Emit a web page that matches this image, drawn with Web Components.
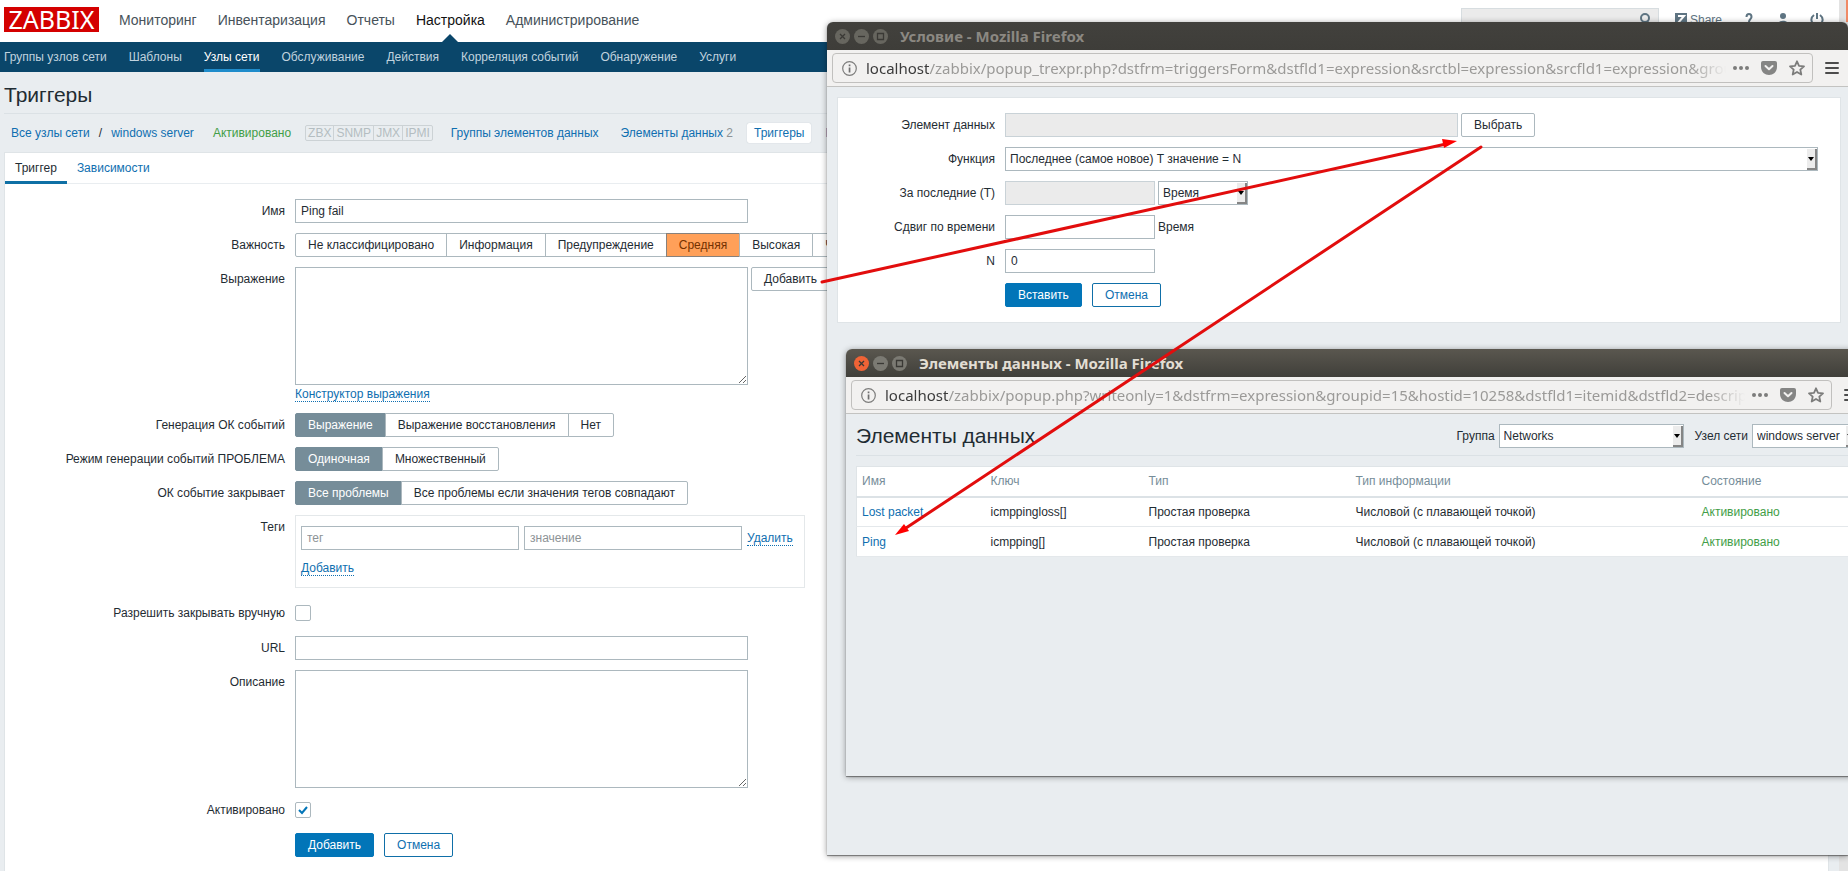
<!DOCTYPE html>
<html lang="ru">
<head>
<meta charset="utf-8">
<title>Триггеры</title>
<style>
html, body { margin: 0; }
body { font: 12px/16px "Liberation Sans", Arial, sans-serif; color: #1f2c33; background: #e9edf0; }
</style>
</head>
<body>
<zbx-desktop></zbx-desktop>
<script>
const base = `
*, *::before, *::after { box-sizing: border-box; }
a { color: #0f6fb0; text-decoration: none; }
h1 { margin: 0; font-size: 21px; line-height: 24px; font-weight: 400; }
`;
const controls = `
input, select, textarea, button { font: inherit; color: inherit; margin: 0; border-radius: 0; }
input[type=text], select, textarea { border: 1px solid #acb8be; background: #fff; height: 24px; padding: 0 5px; outline: 0; }
input[type=text]:disabled { background: #ebebeb; border-color: #c9d2d7; }
input::placeholder { color: #8d9396; opacity: 1; }
textarea { display: block; height: 118px; resize: vertical; padding: 4px 5px; }
.wide { width: 453px; }
.short { width: 150px; }
input[type=checkbox] { appearance: none; display: block; width: 16px; height: 16px; border: 1px solid #acb8be; border-radius: 2px; background: #fff; margin: 4px 0 5px; }
.check { display: grid; justify-content: start; }
.check > * { grid-area: 1 / 1; }
.check svg { margin: 4px 0 5px; width: 16px; height: 16px; pointer-events: none; visibility: hidden; }
.check input:checked + svg { visibility: visible; }
button { height: 24px; padding: 0 12px; border: 1px solid #acb8be; border-radius: 2px; background: #fff; white-space: nowrap; }
button.primary { background: #0275b8; border-color: #0275b8; color: #fff; }
button.ghost { border-color: #0f6fa8; color: #0f6fb0; }
button.text { height: 16px; padding: 0; border: 0; border-bottom: 1px dotted #0f6fb0; border-radius: 0; background: none; color: #0f6fb0; }
.select { display: inline-grid; }
.select > * { grid-area: 1 / 1; }
.select select { appearance: none; width: 100%; padding: 0 14px 0 4px; }
.select i { justify-self: end; width: 10px; margin: 2px 1px 1px 0; background: #ececec; border: solid #858585; border-width: 0 2px 2px 0; display: grid; place-items: center; pointer-events: none; }
.select svg { width: 6px; height: 4px; }
.line { display: flex; align-items: center; gap: 3px; }
.actions { display: flex; gap: 10px; }
`;
const caret = `<i><svg viewBox="0 0 6 4"><path d="M0 0h6L3 4z" fill="#000"/></svg></i>`;

function define(name, css, html) {
  const t = document.createElement('template');
  t.innerHTML = `<style>${base}${css}</style>${html}`;
  customElements.define(name, class extends HTMLElement {
    constructor() {
      super();
      this.attachShadow({ mode: 'open' }).append(t.content.cloneNode(true));
    }
  });
}

/* Label and field side by side */
define('zbx-row', `
:host { display: grid; grid-template-columns: var(--label-width, 280px) 1fr; gap: 10px; }
.l { text-align: right; line-height: 24px; white-space: nowrap; }
.f { min-width: 0; }
`, `<div class="l"><slot name="label"></slot></div><div class="f"><slot></slot></div>`);

/* Group of radio buttons drawn as joined segments */
customElements.define('zbx-segments', class extends HTMLElement {
  connectedCallback() {
    if (this.shadowRoot) return;
    const root = this.attachShadow({ mode: 'open' });
    const selected = Number(this.getAttribute('selected'));
    const items = this.getAttribute('options').split('|').map((text, i) => `
      <span><input type="radio" name="g" id="o${i}" ${i === selected ? 'checked' : ''}><label for="o${i}">${text}</label></span>`).join('');
    root.innerHTML = `<style>${base}
      :host { display: flex; --on: #768d99; --on-text: #fff; --on-line: #768d99; }
      :host([tone=average]) { --on: #ffa059; --on-text: #733100; --on-line: #87817c; }
      div { display: flex; }
      span { position: relative; margin-right: -1px; }
      input { position: absolute; inset: 0; margin: 0; opacity: 0; }
      label { display: block; height: 24px; line-height: 22px; padding: 0 12px; border: 1px solid #acb8be; background: #fff; white-space: nowrap; }
      span:first-child label { border-radius: 2px 0 0 2px; }
      span:last-child label { border-radius: 0 2px 2px 0; }
      input:checked + label { position: relative; background: var(--on); color: var(--on-text); border-color: var(--on-line); }
    </style><div role="radiogroup" aria-label="${this.getAttribute('label')}">${items}</div>`;
  }
});

define('zbx-header', `
:host { display: block; }
.top { display: flex; height: 42px; background: #fff; padding: 0 4px; }
.logo { align-self: center; margin: 0 20px 3px 0; width: 95px; height: 25px; background: #d40000; color: #fff; font: 25px/25px "Noto Sans", sans-serif; text-align: center; }
.main { display: flex; gap: 21px; font-size: 14px; line-height: 41px; }
.main a { color: #47525a; position: relative; }
.main .on { color: #111; }
.main .on::after { content: ""; position: absolute; left: 50%; bottom: 0; margin-left: -8px; border: 8px solid transparent; border-top: 0; border-bottom-color: #0a466a; }
.sub { display: flex; gap: 22px; height: 30px; padding: 0 4px; background: #0a466a; line-height: 30px; }
.sub a { color: #c0d3df; }
.sub .on { color: #fff; border-bottom: 3px solid #1f8ccb; }
.tools { margin: 0 11px 0 auto; display: flex; align-items: flex-start; padding-top: 8px; gap: 20px; }
.search { position: relative; width: 198px; margin-right: -4px; }
.search input { width: 100%; height: 24px; border: 1px solid #d7dde0; background: #ebebeb; }
.search svg { position: absolute; right: 4px; top: 4px; }
.tools a { display: flex; gap: 3px; color: #5e7482; line-height: 24px; }
.tools svg { display: block; margin-top: 5px; }
.search svg { margin: 0; }
`, `
<div class="top">
  <div class="logo">ZABBIX</div>
  <nav class="main"><a href="#">Мониторинг</a><a href="#">Инвентаризация</a><a href="#">Отчеты</a><a href="#" class="on">Настройка</a><a href="#">Администрирование</a></nav>
  <div class="tools">
    <div class="search"><input type="search" aria-label="Поиск"><svg width="16" height="16" viewBox="0 0 16 16" fill="none" stroke="#5e7482" stroke-width="2"><circle cx="6" cy="6" r="4"/><path d="M8 9l3 4"/></svg></div>
    <a href="#"><svg width="12" height="12" viewBox="0 0 12 12"><path fill="#5e7482" d="M0 0h12v12H0z"/><path d="M3 3h6L3 10h6" fill="none" stroke="#fff" stroke-width="2"/></svg>Share</a>
    <a href="#" aria-label="Справка"><svg width="14" height="14" viewBox="0 0 14 14" fill="none" stroke="#5e7482" stroke-width="2"><path d="M4.500 4c0-4 5-4 5 0 0 2-2.500 2-2.500 5M7 11v2"/></svg></a>
    <a href="#" aria-label="Профиль"><svg width="14" height="14" viewBox="0 0 14 14" fill="#5e7482"><circle cx="7" cy="3" r="3"/><path d="M1 13c0-7 12-7 12 0z"/></svg></a>
    <a href="#" aria-label="Выход"><svg width="14" height="14" viewBox="0 0 14 14" fill="none" stroke="#5e7482" stroke-width="2"><path d="M4 2c-5 4-2 10 3 10s8-6 3-10M7 0v6"/></svg></a>
  </div>
</div>
<nav class="sub"><a href="#">Группы узлов сети</a><a href="#">Шаблоны</a><a href="#" class="on">Узлы сети</a><a href="#">Обслуживание</a><a href="#">Действия</a><a href="#">Корреляция событий</a><a href="#">Обнаружение</a><a href="#">Услуги</a></nav>
`);

define('zbx-breadcrumbs', `
:host { display: flex; align-items: center; height: 38px; padding: 0 7px; white-space: nowrap; }
.path { display: flex; gap: 9px; }
.ok { color: #429e47; margin: 0 14px 0 19px; }
.types { display: flex; border: 1px solid #ccd2d5; border-radius: 2px; line-height: 14px; color: #b4bdc1; margin-right: 18px; }
.types span { padding: 0 2px; }
.types span + span { border-left: 1px solid #ccd2d5; }
.tabs { display: flex; align-items: center; gap: 14px; }
.tabs > .group { margin-right: 8px; }
.tabs > span { color: #8d9396; }
.tabs > .on { padding: 2px 7px; background: #fff; border-radius: 2px; box-shadow: 0 0 1px #acb8be; }
`, `
<span class="path"><a href="#">Все узлы сети</a><span>/</span><a href="#">windows server</a></span>
<span class="ok">Активировано</span>
<span class="types"><span>ZBX</span><span>SNMP</span><span>JMX</span><span>IPMI</span></span>
<span class="tabs"><a href="#" class="group">Группы элементов данных</a><span><a href="#">Элементы данных</a> 2</span><a href="#" class="on">Триггеры</a><a href="#">Графики</a></span>
`);

define('zbx-trigger-form', `${controls}
:host { display: block; background: #fff; border: solid #dfe4e7; border-width: 1px 1px 0; }
.tabs { display: flex; height: 31px; border-bottom: 1px solid #e9edf0; line-height: 30px; }
.tabs a { padding: 0 10px; height: 31px; }
.tabs .on { color: #1f2c33; border-bottom: 3px solid #0f70a5; }
form { display: flex; flex-direction: column; gap: 10px; padding: 15px 0; }
.line { align-items: flex-start; }
.sub { display: flex; height: 18px; padding-top: 1px; align-items: flex-start; }
.tags { width: 510px; height: 73px; margin-bottom: 3px; border: 1px solid #e4e8ea; padding: 10px 5px; }
.tags .line { gap: 5px; align-items: center; margin-bottom: 10px; }
.tags input { width: 218px; }
`, `
<nav class="tabs"><a href="#" class="on">Триггер</a><a href="#">Зависимости</a></nav>
<form>
  <zbx-row><label slot="label" for="name">Имя</label><input type="text" class="wide" id="name" value="Ping fail"></zbx-row>
  <zbx-row><span slot="label">Важность</span><zbx-segments tone="average" label="Важность" selected="3" options="Не классифицировано|Информация|Предупреждение|Средняя|Высокая|Чрезвычайная"></zbx-segments></zbx-row>
  <zbx-row><label slot="label" for="expr">Выражение</label>
    <div class="line"><textarea class="wide" id="expr"></textarea><button type="button">Добавить</button></div>
    <div class="sub"><button type="button" class="text">Конструктор выражения</button></div></zbx-row>
  <zbx-row><span slot="label">Генерация ОК событий</span><zbx-segments label="Генерация ОК событий" selected="0" options="Выражение|Выражение восстановления|Нет"></zbx-segments></zbx-row>
  <zbx-row><span slot="label">Режим генерации событий ПРОБЛЕМА</span><zbx-segments label="Режим генерации событий ПРОБЛЕМА" selected="0" options="Одиночная|Множественный"></zbx-segments></zbx-row>
  <zbx-row><span slot="label">ОК событие закрывает</span><zbx-segments label="ОК событие закрывает" selected="0" options="Все проблемы|Все проблемы если значения тегов совпадают"></zbx-segments></zbx-row>
  <zbx-row><span slot="label">Теги</span>
    <div class="tags"><div class="line"><input type="text" placeholder="тег" aria-label="тег"><input type="text" placeholder="значение" aria-label="значение"><button type="button" class="text">Удалить</button></div><button type="button" class="text">Добавить</button></div></zbx-row>
  <zbx-row><label slot="label" for="manual">Разрешить закрывать вручную</label><span class="check"><input type="checkbox" id="manual"><svg viewBox="0 0 16 16"><path d="M4 8l3 3 5-6" fill="none" stroke="#0275b8" stroke-width="2"/></svg></span></zbx-row>
  <zbx-row><label slot="label" for="url">URL</label><input type="text" class="wide" id="url"></zbx-row>
  <zbx-row><label slot="label" for="desc">Описание</label><textarea class="wide" id="desc"></textarea></zbx-row>
  <zbx-row><label slot="label" for="enabled">Активировано</label><span class="check"><input type="checkbox" id="enabled" checked><svg viewBox="0 0 16 16"><path d="M4 8l3 3 5-6" fill="none" stroke="#0275b8" stroke-width="2"/></svg></span></zbx-row>
  <zbx-row><div class="actions"><button type="button" class="primary">Добавить</button><button type="button" class="ghost">Отмена</button></div></zbx-row>
</form>
`);

/* Browser window: title, address bar and a slotted page */
define('app-window', `
:host { display: flex; flex-direction: column; border-radius: 6px 6px 0 0; background: #e9edf0; box-shadow: 0 1px 1px rgba(60,60,60,.6), 0 1px 6px rgba(0,0,0,.4); --bar: #3e3d39; --bar-top: #42413d; --title: #8b8882; --knob: #67665f; --close: #67665f; --glyph: #3a3935; }
:host([active]) { --bar: #403f3a; --bar-top: #5a574f; --title: #e2ddd3; --knob: #7b7a73; --close: #ef6336; }
.title { display: flex; align-items: center; gap: 4px; height: 28px; padding: 0 8px; border-radius: 6px 6px 0 0; background: linear-gradient(var(--bar-top), var(--bar)); color: var(--title); font: 700 15px/28px "Noto Sans", sans-serif; }
.title svg { width: 15px; height: 15px; overflow: visible; }
.title span { margin-left: 8px; }
.bar { display: flex; align-items: center; height: 37px; padding: 0 9px 0 5px; background: #f2f1f0; border-bottom: 1px solid #c3c3c1; gap: 12px; }
.url { flex: 1; min-width: 0; height: 30px; border: 1px solid #c1c0be; border-radius: 4px; display: flex; align-items: center; gap: 12px; padding: 0 7px 0 9px; }
.url p { flex: 1; min-width: 0; margin: 0 -5px 0 -3px; overflow: hidden; white-space: nowrap; color: #9b9a98; font: 15px/24px "Noto Sans", sans-serif; mask-image: linear-gradient(to left, transparent, #000 36px); }
.url b { font-weight: 400; color: #3c3c3c; }
svg { display: block; flex: none; }
`, `
<div class="title">
  <svg viewBox="0 0 15 15"><circle cx="7.5" cy="7.5" r="7.5" fill="var(--close)"/><path d="M5 5l5 5m0-5l-5 5" stroke="var(--glyph)" stroke-width="1.3"/></svg>
  <svg viewBox="0 0 15 15"><circle cx="7.5" cy="7.5" r="7.5" fill="var(--knob)"/><path d="M4 7.5h7" stroke="var(--glyph)" stroke-width="1.3"/></svg>
  <svg viewBox="0 0 15 15"><circle cx="7.5" cy="7.5" r="7.5" fill="var(--knob)"/><path d="M4.5 4.5h6v6h-6z" fill="none" stroke="var(--glyph)" stroke-width="1.3"/></svg>
  <span><slot name="title"></slot></span>
</div>
<div class="bar">
  <div class="url">
    <svg width="15" height="15" viewBox="0 0 15 15"><circle cx="7.5" cy="7.5" r="6.8" fill="none" stroke="#7d7d7c" stroke-width="1.2"/><path d="M6.7 6.5h1.7v5H6.7zM6.7 3.5h1.7v1.8H6.7z" fill="#6f6f6f"/></svg>
    <p><b>localhost</b><slot name="address"></slot></p>
    <svg width="16" height="16" viewBox="0 0 16 16" fill="#7c7c7b"><circle cx="2" cy="8" r="2"/><circle cx="8" cy="8" r="2"/><circle cx="14" cy="8" r="2"/></svg>
    <svg width="16" height="16" viewBox="0 0 16 16"><path d="M2 1h12q2 0 2 2v4c0 5-4 8-8 8S0 12 0 7V3q0-2 2-2z" fill="#858584"/><path d="M4.5 6L8 9.300l3.500-3.300" fill="none" stroke="#f2f1f0" stroke-width="2" stroke-linecap="round" stroke-linejoin="round"/></svg>
    <svg width="16" height="16" viewBox="0 0 16 16"><path d="M8 1.300l2 4.500 5 .5-3.700 3.300 1 4.900L8 12l-4.300 2.500 1-4.900L1 6.300l5-.5z" fill="none" stroke="#7c7c7b" stroke-width="1.800" stroke-linejoin="round"/></svg>
  </div>
  <svg width="14" height="14" viewBox="0 0 14 14"><path d="M1 2h12M1 7h12M1 12h12" stroke="#4c4c4c" stroke-width="2" stroke-linecap="round"/></svg>
</div>
<slot></slot>
`);

define('zbx-condition-form', `${controls}
:host { display: block; padding: 10px 7px 10px 10px; --label-width: 157px; }
form { display: flex; flex-direction: column; gap: 10px; padding: 15px 22px 15px 0; background: #fff; border: 1px solid #dfe4e7; }
.full { display: grid; }
.unit { width: 90px; }
`, `
<form>
  <zbx-row><label slot="label" for="item">Элемент данных</label><div class="line"><input type="text" class="wide" id="item" disabled><button type="button">Выбрать</button></div></zbx-row>
  <zbx-row><label slot="label" for="fn">Функция</label><span class="select full"><select id="fn"><option>Последнее (самое новое) T значение = N</option></select>${caret}</span></zbx-row>
  <zbx-row><label slot="label" for="last">За последние (T)</label><div class="line"><input type="text" class="short" id="last" disabled><span class="select unit"><select aria-label="Единица"><option>Время</option></select>${caret}</span></div></zbx-row>
  <zbx-row><label slot="label" for="shift">Сдвиг по времени</label><div class="line"><input type="text" class="short" id="shift"><span>Время</span></div></zbx-row>
  <zbx-row><label slot="label" for="n">N</label><input type="text" class="short" id="n" value="0"></zbx-row>
  <zbx-row><div class="actions"><button type="button" class="primary">Вставить</button><button type="button" class="ghost">Отмена</button></div></zbx-row>
</form>
`);

define('zbx-item-list', `${controls}
:host { display: block; padding: 0 10px; }
header { display: flex; align-items: center; height: 42px; border-bottom: 1px solid #dbe1e5; margin-bottom: 10px; padding-top: 3px; white-space: nowrap; }
h1 { flex: 1; }
header label { margin: 0 4px 0 11px; }
.group { width: 185px; }
.host { width: 105px; }
table { width: 100%; table-layout: fixed; border-collapse: collapse; background: #fff; border: 1px solid #dfe4e7; }
th, td { height: 30px; padding: 0 5px; text-align: left; font-weight: 400; border-bottom: 1px solid #e4e8eb; white-space: nowrap; }
th { color: #768d99; border-bottom: 2px solid #dce2e6; }
.ok { color: #429e47; }
`, `
<header><h1>Элементы данных</h1>
<label for="grp">Группа</label><span class="select group"><select id="grp"><option>Networks</option></select>${caret}</span>
<label for="hst">Узел сети</label><span class="select host"><select id="hst"><option>windows server</option></select>${caret}</span></header>
<table>
<colgroup><col style="width:129px"><col style="width:158px"><col style="width:207px"><col style="width:346px"><col></colgroup>
<thead><tr><th>Имя</th><th>Ключ</th><th>Тип</th><th>Тип информации</th><th>Состояние</th></tr></thead>
<tbody><tr><td><a href="#">Lost packet</a></td><td>icmppingloss[]</td><td>Простая проверка</td><td>Числовой (с плавающей точкой)</td><td class="ok">Активировано</td></tr>
<tr><td><a href="#">Ping</a></td><td>icmpping[]</td><td>Простая проверка</td><td>Числовой (с плавающей точкой)</td><td class="ok">Активировано</td></tr></tbody>
</table>
`);

define('zbx-desktop', `
:host { display: block; position: relative; min-height: 100vh; overflow: hidden; }
.page { display: flex; min-height: 100vh; }
.site { flex: 1; min-width: 0; display: flex; flex-direction: column; }
.site > zbx-trigger-form { flex: 1; }
.site h1, .site zbx-breadcrumbs, .site zbx-trigger-form { margin: 0 10px 0 4px; }
.site h1 { height: 42px; line-height: 46px; border-bottom: 1px solid #dbe1e5; }
.scroll { width: 9px; background: linear-gradient(#f08a66, #f08a66) right top / 2px 22px no-repeat #e3e3e3; }
app-window { position: absolute; }
.condition { top: 22px; left: 827px; right: 0; min-height: 833px; }
.items { top: 349px; left: 846px; right: -19px; min-height: 427px; }
.arrows { position: absolute; left: 820px; top: 138px; pointer-events: none; }
`, `
<div class="page">
  <div class="site">
    <zbx-header></zbx-header>
    <h1>Триггеры</h1>
    <zbx-breadcrumbs></zbx-breadcrumbs>
    <zbx-trigger-form></zbx-trigger-form>
  </div>
  <div class="scroll"></div>
</div>
<app-window class="condition"><span slot="title">Условие - Mozilla Firefox</span><span slot="address">/zabbix/popup_trexpr.php?dstfrm=triggersForm&amp;dstfld1=expression&amp;srctbl=expression&amp;srcfld1=expression&amp;groupid=15</span>
  <zbx-condition-form></zbx-condition-form></app-window>
<app-window class="items" active><span slot="title">Элементы данных - Mozilla Firefox</span><span slot="address">/zabbix/popup.php?writeonly=1&amp;dstfrm=expression&amp;groupid=15&amp;hostid=10258&amp;dstfld1=itemid&amp;dstfld2=description</span>
  <zbx-item-list></zbx-item-list></app-window>
<svg class="arrows" width="670" height="400" viewBox="0 0 670 400"><g stroke="#e20d0d" stroke-width="3" stroke-linecap="round"><path d="M2 144L626 6"/><path d="M661 9L86 390"/></g><g fill="#f00"><path d="M637 3l-15-2 2 9z"/><path d="M75 397l9-11 5 7z"/></g></svg>
`);
</script>
</body>
</html>
